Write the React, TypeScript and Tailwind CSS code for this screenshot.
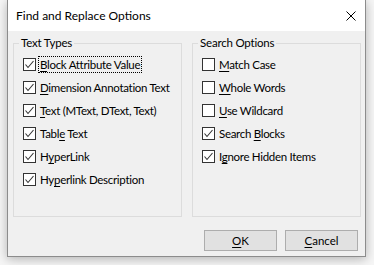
const font = { fontFamily: 'Lato, "Noto Sans", sans-serif' };

type Item = { label: string; key: number; checked: boolean; focus?: boolean };

const textTypes: Item[] = [
  { label: "Block Attribute Value", key: 0, checked: true, focus: true },
  { label: "Dimension Annotation Text", key: 0, checked: true },
  { label: "Text (MText, DText, Text)", key: 0, checked: true },
  { label: "Table Text", key: 4, checked: true },
  { label: "HyperLink", key: 1, checked: true },
  { label: "Hyperlink Description", key: 2, checked: true },
];

const searchOptions: Item[] = [
  { label: "Match Case", key: 0, checked: false },
  { label: "Whole Words", key: 0, checked: false },
  { label: "Use Wildcard", key: 0, checked: false },
  { label: "Search Blocks", key: 7, checked: true },
  { label: "Ignore Hidden Items", key: 1, checked: true },
];

function Mnemonic({ text, at }: { text: string; at: number }) {
  return (
    <>
      {text.slice(0, at)}
      <span className="underline underline-offset-2">{text[at]}</span>
      {text.slice(at + 1)}
    </>
  );
}

function CheckRow({ item }: { item: Item }) {
  return (
    <div className="flex h-[23px] items-center gap-[3px] whitespace-nowrap">
      <span className="flex h-[13px] w-[13px] shrink-0 items-center justify-center border border-[#333] bg-white">
        {item.checked && (
          <svg width="11" height="11" viewBox="0 0 11 11">
            <polyline points="1.5,5.5 4,8.5 9.5,2" fill="none" stroke="#333" strokeWidth="1.1" />
          </svg>
        )}
      </span>
      <span
        className={
          "px-[1px] text-[11.5px] leading-[15px] tracking-[-0.3px] " +
          (item.focus ? "outline outline-1 outline-dotted outline-black" : "")
        }
      >
        <Mnemonic text={item.label} at={item.key} />
      </span>
    </div>
  );
}

function Group({ title, items }: { title: string; items: Item[] }) {
  return (
    <fieldset className="h-[182px] w-[169px] min-w-0 border border-[#dcdcdc]">
      <legend className="ml-[5px] px-[2px] text-[11.5px] leading-[16px] tracking-[-0.2px]">{title}</legend>
      <div className="pl-[9px] pt-[2px]">
        {items.map((it) => (
          <CheckRow key={it.label} item={it} />
        ))}
      </div>
    </fieldset>
  );
}

function Button({ label, at }: { label: string; at: number }) {
  return (
    <button className="h-[21px] w-[73px] border border-[#adadad] bg-[#e1e1e1] text-[11.5px] leading-[18px] text-black">
      <Mnemonic text={label} at={at} />
    </button>
  );
}

export default function App() {
  return (
    <div className="h-[265px] w-[374px] bg-[#f6f6f6] pl-[7px]" style={font}>
      <div className="flex h-[257px] w-[359px] flex-col border-x border-b border-[#8c8c8c] bg-[#f0f0f0] text-[12px] text-black shadow-[0_2px_10px_rgba(0,0,0,0.28)]">
        <div className="flex h-[31px] items-center justify-between bg-white pl-[8px] pr-[9px]">
          <span className="text-[12px]">Find and Replace Options</span>
          <svg width="10" height="10" viewBox="0 0 10 10">
            <path d="M0.5 0.5 L9.5 9.5 M9.5 0.5 L0.5 9.5" stroke="#000" strokeWidth="1" />
          </svg>
        </div>
        <div className="flex gap-[10px] pl-[5px] pt-[4px]">
          <Group title="Text Types" items={textTypes} />
          <Group title="Search Options" items={searchOptions} />
        </div>
        <div className="flex justify-end gap-[8px] pr-[7px] pt-[13px]">
          <Button label="OK" at={0} />
          <Button label="Cancel" at={0} />
        </div>
      </div>
    </div>
  );
}
